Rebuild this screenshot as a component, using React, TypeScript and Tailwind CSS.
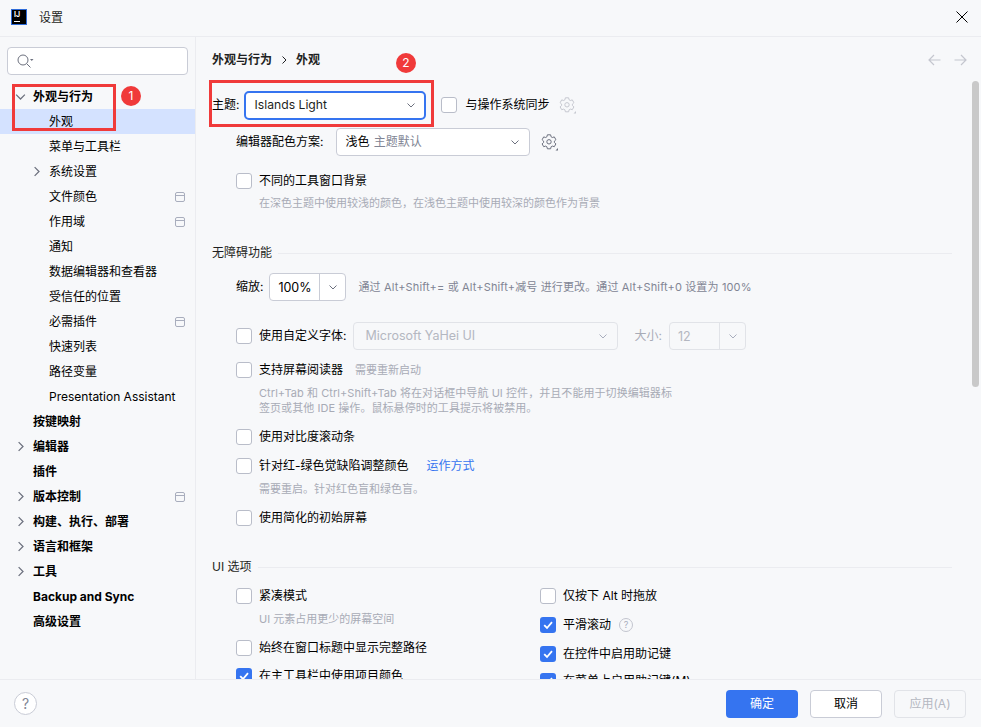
import React from "react";

const FONT = "font-['Inter','Noto_Sans_CJK_SC',sans-serif]";

function Chevron({ dir = "down", className = "", size = 12 }: { dir?: "down" | "right" | "left"; className?: string; size?: number }) {
  const d = dir === "down" ? "M2.5 4.5 L6 8 L9.5 4.5" : "M4.5 2.5 L8 6 L4.5 9.5";
  return (
    <svg width={size} height={size} viewBox="0 0 12 12" fill="none" stroke="currentColor" strokeWidth="1" className={`shrink-0 ${className}`}>
      <path d={d} />
    </svg>
  );
}

function Gear({ className = "" }: { className?: string }) {
  return (
    <svg width="18" height="18" viewBox="0 0 18 18" fill="none" stroke="currentColor" strokeWidth="1" className={`shrink-0 ${className}`}>
      <path d="M6.4 1.8h3.2l.5 2 1.2.7 2-.6 1.6 2.8-1.5 1.4v1.4l1.5 1.4-1.6 2.8-2-.6-1.2.7-.5 2H6.4l-.5-2-1.2-.7-2 .6-1.6-2.8 1.5-1.4V8.1L1.1 6.7l1.6-2.8 2 .6 1.2-.7z" />
      <circle cx="8" cy="8.8" r="2.2" />
      <path d="M17 15v2.5h-2.5z" fill="currentColor" stroke="none" />
    </svg>
  );
}

function Check({ checked = false, className = "" }: { checked?: boolean; className?: string }) {
  if (checked) {
    return (
      <span className={`flex h-4 w-4 shrink-0 items-center justify-center rounded-[3px] bg-[#3574f0] ${className}`}>
        <svg width="12" height="12" viewBox="0 0 12 12" fill="none" stroke="#fff" strokeWidth="1.8">
          <path d="M2.2 6.2 L5 9 L10 3.2" />
        </svg>
      </span>
    );
  }
  return <span className={`block h-4 w-4 shrink-0 rounded-[3px] border border-[#b9bdc9] bg-white ${className}`} />;
}

function CheckRow({ label, checked, top, extra }: { label: string; checked?: boolean; top: string; extra?: React.ReactNode }) {
  return (
    <div className={`flex h-5 items-center ${top}`}>
      <Check checked={checked} />
      <span className="ml-[7px] whitespace-nowrap text-black">{label}</span>
      {extra}
    </div>
  );
}

function Section({ title, top }: { title: string; top: string }) {
  return (
    <div className={`flex h-5 items-center ${top}`}>
      <span className="text-[#1e1f22]">{title}</span>
      <span className="ml-1.5 h-px flex-1 bg-[#ebecf0]" />
    </div>
  );
}

const nav: { label: string; bold?: boolean; chevron?: "down" | "right"; sub?: boolean; selected?: boolean; mark?: boolean }[] = [
  { label: "外观与行为", bold: true, chevron: "down" },
  { label: "外观", sub: true, selected: true },
  { label: "菜单与工具栏", sub: true },
  { label: "系统设置", sub: true, chevron: "right" },
  { label: "文件颜色", sub: true, mark: true },
  { label: "作用域", sub: true, mark: true },
  { label: "通知", sub: true },
  { label: "数据编辑器和查看器", sub: true },
  { label: "受信任的位置", sub: true },
  { label: "必需插件", sub: true, mark: true },
  { label: "快速列表", sub: true },
  { label: "路径变量", sub: true },
  { label: "Presentation Assistant", sub: true },
  { label: "按键映射", bold: true },
  { label: "编辑器", bold: true, chevron: "right" },
  { label: "插件", bold: true },
  { label: "版本控制", bold: true, chevron: "right", mark: true },
  { label: "构建、执行、部署", bold: true, chevron: "right" },
  { label: "语言和框架", bold: true, chevron: "right" },
  { label: "工具", bold: true, chevron: "right" },
  { label: "Backup and Sync", bold: true },
  { label: "高级设置", bold: true },
];

function NavRow({ item }: { item: (typeof nav)[number] }) {
  return (
    <div className={`flex h-[25px] items-center pr-[10px] ${item.selected ? "bg-[#d4e2ff]" : ""}`}>
      <span className={`flex w-3 shrink-0 justify-center text-[#6c707e] ${item.sub ? "ml-[30px]" : "ml-[14px]"}`}>
        {item.chevron ? <Chevron dir={item.chevron} size={15} /> : null}
      </span>
      <span className={`ml-[7px] flex-1 whitespace-nowrap text-black ${item.bold ? "font-bold" : ""}`}>{item.label}</span>
      {item.mark ? (
        <svg width="10" height="10" viewBox="0 0 10 10" fill="none" stroke="#a8adbd" strokeWidth="1" className="shrink-0">
          <rect x="0.5" y="0.5" width="9" height="9" rx="1.5" />
          <path d="M0.5 3.5 H9.5" />
        </svg>
      ) : null}
    </div>
  );
}

export default function App() {
  return (
    <div className={`relative flex h-[727px] w-[981px] flex-col overflow-hidden bg-[#f7f8fa] text-[12px] leading-none text-black ${FONT}`}>
      {/* title bar */}
      <header className="flex h-[37px] shrink-0 items-center border-b border-[#ebecf0] pl-[11px] pr-[13px]">
        <span className="mt-[-3px] flex h-[16px] w-[16px] flex-col justify-between border border-[#2e6bd8] bg-black px-[2px] pb-[2px] pt-[1px]">
          <span className="text-[7px] font-bold leading-[7px] text-white">IJ</span>
          <span className="h-px w-[6px] bg-white" />
        </span>
        <span className="ml-[12px] text-[#1e1f22]">设置</span>
        <svg width="12" height="12" viewBox="0 0 12 12" fill="none" stroke="#000" strokeWidth="1" className="ml-auto mt-[-3px]">
          <path d="M0.5 0.5 L11.5 11.5 M11.5 0.5 L0.5 11.5" />
        </svg>
      </header>

      <div className="flex min-h-0 flex-1">
        {/* sidebar */}
        <aside className="flex w-[196px] shrink-0 flex-col border-r border-[#ebecf0]">
          <div className="mx-[7px] mt-[10px] flex h-[28px] shrink-0 items-center rounded-[4px] border border-[#c9ccd6] bg-white pl-[9px]">
            <svg width="18" height="15" viewBox="0 0 18 15" fill="none" stroke="#6c707e" strokeWidth="1">
              <circle cx="6" cy="6" r="5" />
              <path d="M9.8 9.8 L13.5 13.5" />
              <path d="M13 5 h3.5 l-1.75 2z" fill="#6c707e" stroke="none" />
            </svg>
          </div>
          <nav className="mt-[9px]">
            {nav.map((item) => (
              <NavRow key={item.label} item={item} />
            ))}
          </nav>
        </aside>

        {/* main */}
        <main className="relative min-w-0 flex-1 overflow-hidden pl-[16px] pr-[29px]">
          <div className="mt-[13px] flex h-5 items-center justify-between">
            <div className="flex items-center font-bold text-[#1e1f22]">
              <span>外观与行为</span>
              <Chevron dir="right" className="mx-[6px] text-[#1e1f22]" />
              <span>外观</span>
            </div>
            <div className="mr-[-15px] flex items-center gap-[13px] text-[#c4c6ce]">
              <svg width="13" height="12" viewBox="0 0 13 12" fill="none" stroke="currentColor" strokeWidth="1.2">
                <path d="M12.5 6 H1 M6 1 L1 6 L6 11" />
              </svg>
              <svg width="13" height="12" viewBox="0 0 13 12" fill="none" stroke="currentColor" strokeWidth="1.2">
                <path d="M0.5 6 H12 M7 1 L12 6 L7 11" />
              </svg>
            </div>
          </div>

          {/* theme */}
          <div className="mt-[20px] flex h-[30px] items-center">
            <span>主题:</span>
            <div className="ml-[5px] flex h-[29px] w-[182px] items-center justify-between rounded-[5px] border-2 border-[#3574f0] bg-white pl-[8px] pr-[7px] text-[#1e1f22]">
              <span className="text-[12.2px]">Islands Light</span>
              <Chevron className="text-[#6c707e]" />
            </div>
            <Check className="ml-[15px]" />
            <span className="ml-[8px]">与操作系统同步</span>
            <Gear className="ml-[10px] text-[#c6c8d0]" />
          </div>

          {/* scheme */}
          <div className="mt-[8px] flex h-[28px] items-center pl-[24px]">
            <span>编辑器配色方案:</span>
            <div className="ml-[13px] flex h-[28px] w-[194px] items-center justify-between rounded-[4px] border border-[#c9ccd6] bg-white pl-[8px] pr-[8px]">
              <span>
                浅色 <span className="ml-[1px] text-[#818594]">主题默认</span>
              </span>
              <Chevron className="text-[#6c707e]" />
            </div>
            <Gear className="ml-[11px] text-[#6c707e]" />
          </div>

          <div className="pl-[24px]">
            <CheckRow label="不同的工具窗口背景" top="mt-[15px]" />
            <p className="mt-[7px] pl-[23px] text-[11px] text-[#a8abb6]">在深色主题中使用较浅的颜色，在浅色主题中使用较深的颜色作为背景</p>
          </div>

          <Section title="无障碍功能" top="mt-[34px]" />

          <div className="mt-[10px] flex h-[28px] items-center pl-[24px]">
            <span>缩放:</span>
            <div className="ml-[6px] flex h-[28px] w-[77px] items-center rounded-[4px] border border-[#c9ccd6] bg-white">
              <span className="flex w-[50px] justify-center border-r border-[#c9ccd6] py-[7px] text-[12.5px] leading-[13px]">100%</span>
              <Chevron className="ml-[7px] text-[#6c707e]" />
            </div>
            <span className="ml-[12px] whitespace-nowrap text-[11px] tracking-[0.14px] text-[#818594]">通过 Alt+Shift+= 或 Alt+Shift+减号 进行更改。通过 Alt+Shift+0 设置为 100%</span>
          </div>

          <div className="mt-[21px] flex h-[28px] items-center pl-[24px]">
            <Check />
            <span className="ml-[7px] whitespace-nowrap">使用自定义字体:</span>
            <div className="ml-[7px] flex h-[28px] w-[265px] items-center justify-between rounded-[4px] border border-[#e1e3e8] pl-[11px] pr-[8px] text-[#b4b7c1]">
              <span className="text-[12.5px]">Microsoft YaHei UI</span>
              <Chevron className="text-[#a8adbd]" />
            </div>
            <span className="ml-[16px] whitespace-nowrap text-[#a8abb6]">大小:</span>
            <div className="ml-[7px] flex h-[28px] w-[77px] items-center rounded-[4px] border border-[#e1e3e8] text-[#b4b7c1]">
              <span className="w-[50px] border-r border-[#e1e3e8] py-[7px] pl-[8px] text-[12.5px] leading-[13px]">12</span>
              <Chevron className="ml-[7px] text-[#a8adbd]" />
            </div>
          </div>

          <div className="pl-[24px]">
            <CheckRow
              label="支持屏幕阅读器"
              top="mt-[10px]"
              extra={<span className="ml-[12px] text-[11px] text-[#a8abb6]">需要重新启动</span>}
            />
            <div className="mt-[6px] whitespace-nowrap pl-[23px] text-[11px] leading-[15px] tracking-[0.06px] text-[#a8abb6]">
              <p>Ctrl+Tab 和 Ctrl+Shift+Tab 将在对话框中导航 UI 控件，并且不能用于切换编辑器标</p>
              <p>签页或其他 IDE 操作。鼠标悬停时的工具提示将被禁用。</p>
            </div>
            <CheckRow label="使用对比度滚动条" top="mt-[11px]" />
            <CheckRow
              label="针对红-绿色觉缺陷调整颜色"
              top="mt-[9px]"
              extra={<span className="ml-[18px] text-[#3574f0]">运作方式</span>}
            />
            <p className="mt-[8px] pl-[23px] text-[11px] text-[#a8abb6]">需要重启。针对红色盲和绿色盲。</p>
            <CheckRow label="使用简化的初始屏幕" top="mt-[13px]" />
          </div>

          <Section title="UI 选项" top="mt-[29px]" />

          <div className="grid grid-cols-[304px_1fr] pl-[24px]">
            <div>
              <CheckRow label="紧凑模式" top="mt-[9px]" />
              <p className="mt-[8px] pl-[23px] text-[11px] text-[#a8abb6]">UI 元素占用更少的屏幕空间</p>
              <CheckRow label="始终在窗口标题中显示完整路径" top="mt-[13px]" />
              <CheckRow label="在主工具栏中使用项目颜色" checked top="mt-[8px]" />
            </div>
            <div>
              <CheckRow label="仅按下 Alt 时拖放" top="mt-[9px]" />
              <CheckRow
                label="平滑滚动"
                checked
                top="mt-[9px]"
                extra={
                  <svg width="14" height="14" viewBox="0 0 14 14" className="ml-[8px]" fill="none">
                    <circle cx="7" cy="7" r="6.5" stroke="#c2c4ce" />
                    <text x="7" y="10" textAnchor="middle" fontSize="9" fill="#a8adbd">?</text>
                  </svg>
                }
              />
              <CheckRow label="在控件中启用助记键" checked top="mt-[9px]" />
              <CheckRow label="在菜单上启用助记键(M)" checked top="mt-[7px]" />
            </div>
          </div>

          {/* scrollbar */}
          <span className="absolute right-[2px] top-[44px] h-[306px] w-[7px] rounded-full bg-[#c9c9c9]" />
        </main>
      </div>

      {/* footer */}
      <footer className="flex h-[48px] shrink-0 items-center border-t border-[#ebecf0] pl-[14px] pr-[15px]">
        <span className="flex h-[23px] w-[23px] items-center justify-center rounded-full border border-[#c9ccd6] bg-white text-[14px] text-[#818594]">?</span>
        <button className="ml-auto flex h-[28px] w-[72px] items-center justify-center rounded-[4px] bg-[#3574f0] text-white">确定</button>
        <button className="ml-[12px] flex h-[28px] w-[72px] items-center justify-center rounded-[4px] border border-[#c9ccd6] bg-white text-black">取消</button>
        <button className="ml-[12px] flex h-[28px] w-[72px] items-center justify-center rounded-[4px] border border-[#e1e3e8] text-[#b4b7c1]">应用(A)</button>
      </footer>

      {/* annotations */}
      <span className="absolute left-[12px] top-[84px] h-[47px] w-[104px] border-[3px] border-[#f03a3a]" />
      <span className="absolute left-[121px] top-[86px] flex h-5 w-5 items-center justify-center rounded-full bg-[#f03a3a] text-[12px] text-white">1</span>
      <span className="absolute left-[209px] top-[80px] h-[47px] w-[225px] border-[3px] border-[#f03a3a]" />
      <span className="absolute left-[396px] top-[53px] flex h-5 w-5 items-center justify-center rounded-full bg-[#f03a3a] text-[12px] text-white">2</span>
    </div>
  );
}
